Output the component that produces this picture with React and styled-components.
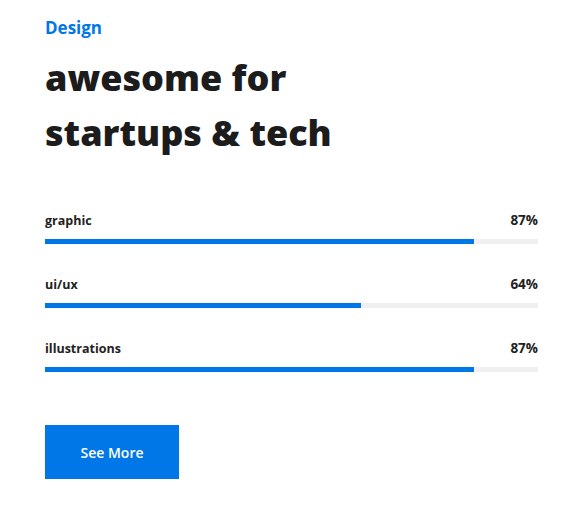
import React from 'react';
import styled, { createGlobalStyle } from 'styled-components';

const GlobalStyle = createGlobalStyle`
  body {
    margin: 0;
    background: #fff;
    font-family: "Open Sans", "Noto Sans", sans-serif;
  }
`;

const Section = styled.section`
  width: 493px;
  padding: 16px 0 0 45px;
`;

const Eyebrow = styled.div`
  font-size: 17px;
  font-weight: 700;
  color: #0077e6;
  line-height: 24px;
`;

const Heading = styled.h2`
  margin: 10px 0 0;
  font-size: 36px;
  font-weight: 800;
  line-height: 55px;
  color: #1c1c1c;
`;

const Skills = styled.div`
  margin-top: 51px;
  display: flex;
  flex-direction: column;
  gap: 31px;
`;

const Skill = styled.div`
  display: flex;
  flex-direction: column;
  gap: 9px;
`;

const SkillHead = styled.div`
  display: flex;
  justify-content: space-between;
  font-size: 12.5px;
  font-weight: 700;
  color: #222;
  line-height: 19px;
`;

const Percent = styled.span`
  font-size: 13.5px;
`;

const Track = styled.div`
  height: 5px;
  background: #efefef;
`;

const Fill = styled.div`
  height: 100%;
  background: #0077e6;
`;

const Button = styled.button`
  margin-top: 53px;
  width: 134px;
  height: 54px;
  border: 0;
  background: #0077e6;
  color: #fff;
  font-family: inherit;
  font-size: 14px;
  font-weight: 600;
  cursor: pointer;
`;

const skills = [
  { name: 'graphic', value: 87 },
  { name: 'ui/ux', value: 64 },
  { name: 'illustrations', value: 87 },
];

export default function App() {
  return (
    <>
      <GlobalStyle />
      <Section>
        <Eyebrow>Design</Eyebrow>
        <Heading>
          awesome for
          <br />
          startups &amp; tech
        </Heading>
        <Skills>
          {skills.map((s) => (
            <Skill key={s.name}>
              <SkillHead>
                <span>{s.name}</span>
                <Percent>{s.value}%</Percent>
              </SkillHead>
              <Track>
                <Fill style={{ width: `${s.value}%` }} />
              </Track>
            </Skill>
          ))}
        </Skills>
        <Button>See More</Button>
      </Section>
    </>
  );
}
